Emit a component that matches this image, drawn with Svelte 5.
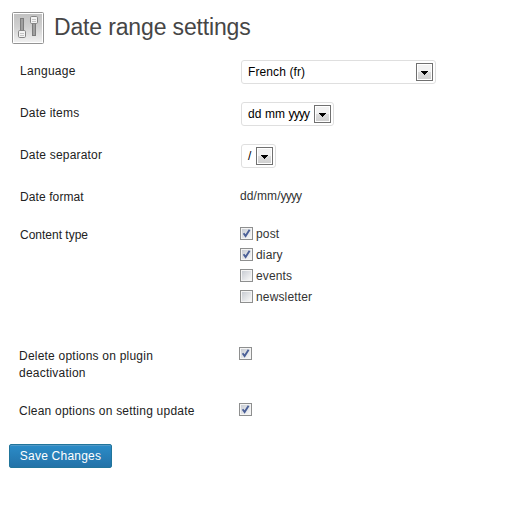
<script>
  const selects = [
    { label: 'Language', value: 'French (fr)', width: 195, tracking: 0.3 },
    { label: 'Date items', value: 'dd mm ', year: 'yyyy', width: 93, tracking: 0.2 },
    { label: 'Date separator', value: '/', width: 35, tracking: 0.2 }
  ];
  const types = [
    { name: 'post', on: true },
    { name: 'diary', on: true },
    { name: 'events', on: false },
    { name: 'newsletter', on: false }
  ];
</script>

{#snippet check(on)}
  <svg class="box" width="13" height="13" viewBox="0 0 13 13">
    <rect x=".5" y=".5" width="12" height="12" fill="#f4f4f4" stroke="#8e8f8f" />
    <rect x="2" y="2" width="9" height="9" fill="url(#well)" />
    {#if on}<path d="M3.6 6.2 L5.6 9 L9.6 2.8" fill="none" stroke="#4a5f97" stroke-width="1.9" />{/if}
  </svg>
{/snippet}

<div class="page">
  <header>
    <svg width="32" height="32" viewBox="0 0 32 32">
      <defs>
        <linearGradient id="plate" x1="0" y1="0" x2="0" y2="1">
          <stop offset="0" stop-color="#c2c2c2" /><stop offset=".45" stop-color="#d0d0d0" /><stop offset="1" stop-color="#f0f0f0" />
        </linearGradient>
        <linearGradient id="well" x1="0" y1="0" x2="1" y2="1">
          <stop offset="0" stop-color="#c8ccd3" /><stop offset="1" stop-color="#f8f8f8" />
        </linearGradient>
      </defs>
      <rect x=".5" y=".5" width="31" height="31" rx="1" fill="#fff" stroke="#949494" />
      <rect x="2" y="2" width="28" height="28" fill="url(#plate)" />
      <rect x="8.5" y="6.5" width="3" height="14" fill="#a0a0a0" stroke="#7c7c7c" />
      <rect x="20.5" y="9.5" width="3" height="14" fill="#a0a0a0" stroke="#7c7c7c" />
      <rect x="6.5" y="18.5" width="7" height="7" rx="1.2" fill="#f4f4f4" stroke="#858585" />
      <path d="M8 21.5h4M8 23.5h4" stroke="#c4c4c4" />
      <rect x="18.5" y="4.5" width="7" height="7" rx="1.2" fill="#f4f4f4" stroke="#858585" />
      <path d="M20 7.5h4M20 9.5h4" stroke="#c4c4c4" />
    </svg>
    <h1>Date range settings</h1>
  </header>

  {#each selects as s}
    <div class="row">
      <span class="label" style:letter-spacing="{s.tracking}px">{s.label}</span>
      <div class="select" style:width="{s.width}px">
        <span>{s.value}{#if s.year}<i class="year">{s.year}</i>{/if}</span>
        <span class="drop"><svg width="7" height="4" viewBox="0 0 7 4" shape-rendering="crispEdges"><path d="M0 0h7v1h-1v1h-1v1h-1v1h-1v-1h-1v-1h-1v-1h-1z" /></svg></span>
      </div>
    </div>
  {/each}
  <div class="row format">
    <span class="label">Date format</span>
    <span class="value">dd/mm/<i class="year">yyyy</i></span>
  </div>
  <div class="row types">
    <span class="label">Content type</span>
    <div class="list">
      {#each types as t}
        <div class="item">{@render check(t.on)}<span>{t.name}</span></div>
      {/each}
    </div>
  </div>
  <div class="row option first">
    <span class="label">Delete options on plugin<br />deactivation</span>
    {@render check(true)}
  </div>
  <div class="row option">
    <span class="label">Clean options on setting update</span>
    {@render check(true)}
  </div>
  <button>Save Changes</button>
</div>

<style>
  :global(body) { background: #fff; }
  .page { width: 530px; height: 530px; box-sizing: border-box; padding-top: 11px; font: 12px/18px "Liberation Sans", Arial, sans-serif; color: #222; overflow: hidden; }
  header { display: flex; height: 40px; padding-left: 12px; }
  header svg { margin-top: 1px; }
  h1 { margin: 0 0 0 10px; font-size: 23px; font-weight: 400; line-height: 32px; letter-spacing: -.15px; color: #464646; white-space: nowrap; }
  svg { flex: none; display: block; }
  .row { display: flex; align-items: flex-start; height: 33px; padding: 9px 0 0 20px; }
  .label { width: 221px; line-height: 18px; margin-top: 2px; white-space: nowrap; letter-spacing: .1px; }
  .select { box-sizing: border-box; height: 24px; display: flex; align-items: center; justify-content: space-between; border: 1px solid #dfdfdf; border-radius: 3px; padding: 0 2px 0 6px; color: #000; white-space: nowrap; letter-spacing: .1px; }
  .drop { box-sizing: border-box; width: 17px; height: 18px; padding-top: 2px; border: 1px solid #707070; box-shadow: inset 0 0 0 1px #fff; background: linear-gradient(#f2f2f2 0 48%, #ddd 52%, #cfcfcf); display: flex; align-items: center; justify-content: center; }
  .year { font-style: normal; letter-spacing: -.85px; }
  .format { height: 29px; }
  .format .label { width: 220px; }
  .value { color: #333; margin-top: 1px; letter-spacing: .1px; }
  .types { height: 112px; }
  .types .label { width: 220px; letter-spacing: 0; }
  .list { display: flex; flex-direction: column; margin-top: -1px; color: #333; letter-spacing: .15px; }
  .item { display: flex; align-items: center; gap: 3px; height: 21px; line-height: 18px; }
  .option { height: 28px; padding-left: 19px; }
  .option.first { height: 47px; }
  .option .label { width: 220px; margin-top: 3px; line-height: 17px; letter-spacing: .22px; }
  .option:not(.first) .label { margin-top: 2px; }
  .option .box { margin-top: 2px; }
  button { display: block; box-sizing: border-box; margin: 15px 0 0 9px; width: 103px; height: 24px; padding: 0; border: 1px solid #21759b; border-radius: 2px; background: linear-gradient(#2b8cc8, #2372a8); box-shadow: inset 0 1px #5299c8; color: #fff; font: 12px/22px "Liberation Sans", Arial, sans-serif; letter-spacing: .22px; }
</style>
